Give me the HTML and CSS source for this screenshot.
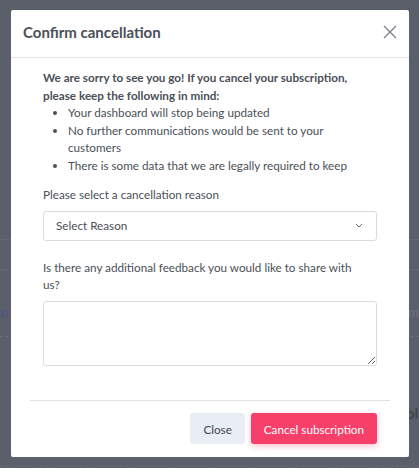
FILE: index.html
```html
<!DOCTYPE html>
<html>
<head>
<meta charset="utf-8">
<link rel="stylesheet" href="styles.css">
</head>
<body>
<div class="backdrop">
  <div class="bg-line bg-line-1"></div>
  <div class="bg-line bg-line-2"></div>
  <span class="bg-text bg-left">to</span>
  <span class="bg-text bg-right">mp</span>
  <div class="bg-dash bg-dash-1"></div>
  <span class="bg-text bg-right-bold">bl</span>
  <div class="bg-dash bg-dash-2"></div>
</div>
<div class="modal">
  <div class="modal-header">
    <h2 class="modal-title">Confirm cancellation</h2>
    <svg class="close-icon" width="14" height="14" viewBox="0 0 14 14"><path d="M1 1L13 13M13 1L1 13" stroke="#7d838c" stroke-width="1.4" fill="none"/></svg>
  </div>
  <div class="modal-body">
    <p class="intro">We are sorry to see you go! If you cancel your subscription, please keep the following in mind:</p>
    <ul class="notes">
      <li>Your dashboard will stop being updated</li>
      <li>No further communications would be sent to your customers</li>
      <li>There is some data that we are legally required to keep</li>
    </ul>
    <label class="field-label">Please select a cancellation reason</label>
    <div class="select">
      <span>Select Reason</span>
      <svg width="8" height="5" viewBox="0 0 8 5"><path d="M1 1L4 4L7 1" stroke="#6b717a" stroke-width="1" fill="none"/></svg>
    </div>
    <label class="field-label feedback-label">Is there any additional feedback you would like to share with us?</label>
    <textarea class="textarea"></textarea>
  </div>
  <div class="modal-footer">
    <button class="btn btn-close">Close</button>
    <button class="btn btn-cancel">Cancel subscription</button>
  </div>
</div>
</body>
</html>
```

FILE: styles.css
```css
html, body {
  margin: 0;
  padding: 0;
}
body {
  width: 419px;
  height: 468px;
  background: #5b5f6a;
  font-family: "Lato", "Open Sans", sans-serif;
  position: relative;
  overflow: hidden;
  color: #4a4f58;
}
.backdrop {
  position: absolute;
  inset: 0;
  overflow: hidden;
}
.bg-line {
  position: absolute;
  left: 0;
  right: 0;
  height: 1px;
  background: #646873;
}
.bg-line-1 { top: 239px; }
.bg-line-2 { top: 269px; }
.bg-dash {
  position: absolute;
  left: 0;
  right: 0;
  height: 0;
  border-top: 1px dashed #686c77;
}
.bg-dash-1 { top: 336px; }
.bg-dash-2 { top: 466px; }
.bg-text {
  position: absolute;
  font-size: 13px;
}
.bg-left { left: -4px; top: 304px; color: #4f5188; }
.bg-right { left: 408px; top: 304px; color: #6f737c; }
.bg-right-bold { left: 406px; top: 404px; color: #43464e; font-weight: 700; font-size: 15px; }

.modal {
  position: absolute;
  left: 11px;
  top: 10px;
  width: 398px;
  height: 447px;
  background: #fff;
  border-radius: 2px;
  box-sizing: border-box;
  display: flex;
  flex-direction: column;
}
.modal-header {
  height: 48px;
  border-bottom: 1px solid #dfe3e8;
  display: flex;
  align-items: center;
  justify-content: space-between;
  padding: 0 12px 3px 12px;
  box-sizing: border-box;
}
.modal-title {
  margin: 0;
  font-size: 15px;
  font-weight: 700;
  color: #4a4f58;
}
.close-icon {
  display: block;
}
.modal-body {
  padding: 11px 32px 0 32px;
  font-size: 11.7px;
  line-height: 17.5px;
  flex: 1;
  display: flex;
  flex-direction: column;
}
.intro {
  margin: 0;
  font-weight: 700;
}
.notes {
  margin: 0;
  padding-left: 25px;
}
.field-label {
  display: block;
  margin-top: 12px;
}
.select {
  margin-top: 7px;
  height: 30px;
  border: 1px solid #d9dde3;
  border-radius: 3px;
  box-sizing: border-box;
  display: flex;
  align-items: center;
  justify-content: space-between;
  padding: 0 13px 0 12px;
}
.feedback-label {
  margin-top: 18px;
  padding-right: 12px;
}
.textarea {
  margin-top: 7px;
  height: 65px;
  border: 1px solid #d9dde3;
  border-radius: 3px;
  box-sizing: border-box;
  resize: vertical;
  font-family: inherit;
}
.modal-footer {
  margin: 0 19px 0 19px;
  border-top: 1px solid #dfe3e8;
  height: 57px;
  display: flex;
  justify-content: flex-end;
  align-items: flex-start;
  padding: 12px 13px 0 0;
  box-sizing: border-box;
  gap: 6px;
}
.btn {
  height: 31px;
  border: none;
  border-radius: 3px;
  font-family: inherit;
  font-size: 11.7px;
  padding: 0 13px;
}
.btn-close {
  background: #e9edf4;
  color: #3f4450;
}
.btn-cancel {
  background: #f64069;
  color: #fff;
  box-shadow: 0 2px 6px rgba(246, 64, 105, 0.35);
}
```
